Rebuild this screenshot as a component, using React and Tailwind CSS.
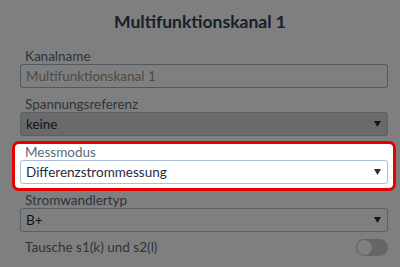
import React from 'react';

const Arrow = () => (
  <svg width="7" height="6" viewBox="0 0 7 6" className="shrink-0">
    <path d="M0 0 H7 L3.5 6 Z" fill="#1f2d3d" />
  </svg>
);

const Select = ({ value, className = '' }) => (
  <div className={`flex h-[24px] items-center justify-between rounded-[3px] border pl-[5px] pr-[6px] text-[13.5px] text-[#1f2d3d] ${className}`}>
    <span>{value}</span>
    <Arrow />
  </div>
);

const Label = ({ children }) => (
  <div className="h-[16px] px-[5px] text-[13.5px] leading-[16px] text-[#5a6978]">{children}</div>
);

export default function App() {
  return (
    <div className="relative h-[267px] w-[400px] overflow-hidden bg-white" style={{ fontFamily: 'Lato, "Noto Sans", sans-serif' }}>
      <div className="h-[44px] text-center text-[17.5px] font-bold leading-[44px] text-[#2f4056]">Multifunktionskanal 1</div>

      <div className="pl-[20px] pr-[12px]">
        <div className="mt-[4px]">
          <Label>Kanalname</Label>
          <div className="flex h-[24px] items-center rounded-[3px] border border-[#9fb3c6] px-[5px] text-[13.5px] text-[#969696]">
            Multifunktionskanal 1
          </div>
        </div>

        <div className="mt-[8px]">
          <Label>Spannungsreferenz</Label>
          <Select value="keine" className="border-[#b4c2d0] bg-[#d4d4d4]" />
        </div>

        {/* highlighted field sits above the dimming layer */}
        <div className="relative z-10 -mx-[8px] mt-[5px] rounded-[7px] border-[3px] border-[#e60000] bg-white px-[5px] pb-[4px]">
          <Label>Messmodus</Label>
          <Select value="Differenzstrommessung" className="border-[#a9bed6] bg-white" />
        </div>

        <div className="mt-[1px]">
          <Label>Stromwandlertyp</Label>
          <Select value="B+" className="border-[#b4c2d0] bg-white" />
        </div>

        <div className="mt-[7px] flex h-[17px] items-center justify-between">
          <span className="px-[5px] text-[13.5px] text-[#5a6978]">Tausche s1(k) und s2(l)</span>
          <div className="flex h-[17px] w-[32px] items-center rounded-full bg-[#cccccc]">
            <div className="h-[17px] w-[17px] rounded-full border border-[#c4c4c4] bg-white" />
          </div>
        </div>
      </div>

      <div className="absolute inset-0 bg-black/50" />
    </div>
  );
}
